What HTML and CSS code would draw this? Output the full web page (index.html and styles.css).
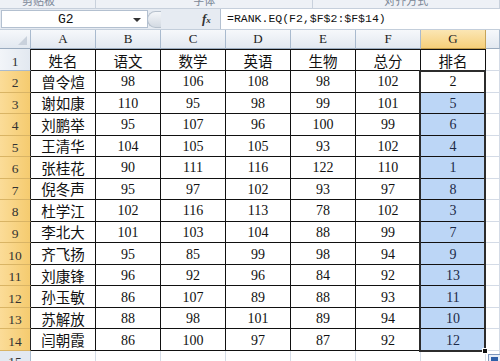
FILE: index.html
```html
<!DOCTYPE html>
<html>
<head>
<meta charset="utf-8">
<link rel="stylesheet" href="styles.css">
</head>
<body>
<div class="ribbon">
  <div class="grp g1"><span>剪贴板</span></div>
  <div class="grp g2"><span>字体</span></div>
  <div class="grp g3"><span>对齐方式</span></div>
  <div class="grp g4"></div>
</div>
<div class="fbar">
  <div class="namebox"><span class="nm">G2</span><span class="arr"></span></div>
  <div class="pill"></div>
  <div class="fx">f<i>x</i></div>
  <div class="formula">=RANK.EQ(F2,$F$2:$F$14)</div>
</div>
<div class="sheet">
  <div class="hd corner"><span class="tri"></span></div>
  <div class="hd col">A</div><div class="hd col">B</div><div class="hd col">C</div><div class="hd col">D</div><div class="hd col">E</div><div class="hd col">F</div><div class="hd col sel">G</div><div class="hd col"></div>

  <div class="rh">1</div><div class="c t">姓名</div><div class="c t">语文</div><div class="c t">数学</div><div class="c t">英语</div><div class="c t">生物</div><div class="c t">总分</div><div class="c t">排名</div><div class="g"></div>
  <div class="rh s">2</div><div class="c t">曾令煊</div><div class="c">98</div><div class="c">106</div><div class="c">108</div><div class="c">98</div><div class="c">102</div><div class="c act">2<span class="selbox"><span class="handle"></span></span></div><div class="g"></div>
  <div class="rh s">3</div><div class="c t">谢如康</div><div class="c">110</div><div class="c">95</div><div class="c">98</div><div class="c">99</div><div class="c">101</div><div class="c b">5</div><div class="g"></div>
  <div class="rh s">4</div><div class="c t">刘鹏举</div><div class="c">95</div><div class="c">107</div><div class="c">96</div><div class="c">100</div><div class="c">99</div><div class="c b">6</div><div class="g"></div>
  <div class="rh s">5</div><div class="c t">王清华</div><div class="c">104</div><div class="c">105</div><div class="c">105</div><div class="c">93</div><div class="c">102</div><div class="c b">4</div><div class="g"></div>
  <div class="rh s">6</div><div class="c t">张桂花</div><div class="c">90</div><div class="c">111</div><div class="c">116</div><div class="c">122</div><div class="c">110</div><div class="c b">1</div><div class="g"></div>
  <div class="rh s">7</div><div class="c t">倪冬声</div><div class="c">95</div><div class="c">97</div><div class="c">102</div><div class="c">93</div><div class="c">97</div><div class="c b">8</div><div class="g"></div>
  <div class="rh s">8</div><div class="c t">杜学江</div><div class="c">102</div><div class="c">116</div><div class="c">113</div><div class="c">78</div><div class="c">102</div><div class="c b">3</div><div class="g"></div>
  <div class="rh s">9</div><div class="c t">李北大</div><div class="c">101</div><div class="c">103</div><div class="c">104</div><div class="c">88</div><div class="c">99</div><div class="c b">7</div><div class="g"></div>
  <div class="rh s">10</div><div class="c t">齐飞扬</div><div class="c">95</div><div class="c">85</div><div class="c">99</div><div class="c">98</div><div class="c">94</div><div class="c b">9</div><div class="g"></div>
  <div class="rh s">11</div><div class="c t">刘康锋</div><div class="c">96</div><div class="c">92</div><div class="c">96</div><div class="c">84</div><div class="c">92</div><div class="c b">13</div><div class="g"></div>
  <div class="rh s">12</div><div class="c t">孙玉敏</div><div class="c">86</div><div class="c">107</div><div class="c">89</div><div class="c">88</div><div class="c">93</div><div class="c b">11</div><div class="g"></div>
  <div class="rh s">13</div><div class="c t">苏解放</div><div class="c">88</div><div class="c">98</div><div class="c">101</div><div class="c">89</div><div class="c">94</div><div class="c b">10</div><div class="g"></div>
  <div class="rh s">14</div><div class="c t">闫朝霞</div><div class="c">86</div><div class="c">100</div><div class="c">97</div><div class="c">87</div><div class="c">92</div><div class="c b">12</div><div class="g"></div>
</div>
<div class="row15">
  <div class="rh15">15</div><div class="e"></div><div class="e"></div><div class="e"></div><div class="e"></div><div class="e"></div><div class="e"></div><div class="e"></div><div class="e last"><span class="paste"><span></span></span></div>
</div>
</body>
</html>
```

FILE: styles.css
```css
* { box-sizing: border-box; }
html, body { margin: 0; padding: 0; }
body {
  width: 500px;
  height: 361px;
  overflow: hidden;
  background: #ffffff;
  font-family: "Liberation Serif", "Noto Sans CJK SC", serif;
}

.ribbon {
  height: 9px;
  display: flex;
  background: #eef1f6;
  border-bottom: 1px solid #c6cfdb;
  overflow: hidden;
}
.grp {
  display: flex;
  justify-content: center;
  border-right: 1px solid #c9d1dc;
}
.grp span {
  font-family: "Noto Sans CJK SC", sans-serif;
  font-size: 11px;
  line-height: 11px;
  color: #7b8797;
  margin-top: -5px;
}
.g1 { width: 100px; padding-right: 18px; }
.g2 { width: 228px; }
.g3 { width: 196px; }
.g4 { flex: 1; border-right: none; }

.fbar {
  height: 21px;
  display: flex;
  align-items: center;
  background: #e6ebf2;
  border-bottom: 1px solid #c3cedb;
}
.namebox {
  width: 147px;
  height: 18px;
  margin-left: 1px;
  background: #ffffff;
  border: 1px solid #b3c0d0;
  display: flex;
  align-items: center;
  position: relative;
}
.nm {
  font-family: "Liberation Mono", monospace;
  font-size: 13px;
  color: #111;
  margin-left: 56px;
}
.arr {
  position: absolute;
  left: 131px;
  top: 7px;
  width: 0; height: 0;
  border-left: 4px solid transparent;
  border-right: 4px solid transparent;
  border-top: 4px solid #333;
}
.pill {
  width: 14px;
  height: 17px;
  margin-left: -1px;
  border-radius: 9px 0 0 9px;
  background: linear-gradient(#f4f6f9, #d3dae3);
  border: 1px solid #b7c1cd;
  border-right: none;
}
.fx {
  margin-left: 41px;
  width: 15px;
  font-family: "Liberation Serif", serif;
  font-style: italic;
  font-weight: bold;
  font-size: 13px;
  color: #333;
}
.fx i { font-size: 9px; }
.formula {
  flex: 1;
  height: 20px;
  margin-left: 3px;
  background: #ffffff;
  border-left: 1px solid #b3c0d0;
  font-family: "Liberation Mono", monospace;
  font-size: 11.5px;
  line-height: 20px;
  padding-left: 6px;
  color: #111;
}

.sheet {
  display: grid;
  grid-template-columns: 31px repeat(7, 65px) 1fr;
  grid-template-rows: 19px 22px repeat(13, 21.54px);
}
.hd {
  background: linear-gradient(#f6f8fb, #e2e8f0);
  border-right: 1px solid #a9bace;
  border-bottom: 1px solid #9aabbf;
  display: flex;
  align-items: center;
  justify-content: center;
  font-family: "Liberation Serif", serif;
  font-size: 13px;
  color: #222;
}
.hd.sel {
  background: linear-gradient(#fbe6b4, #f6cf7a);
  border-right-color: #c6a45a;
  border-bottom-color: #c29b4a;
}
.corner { position: relative; }
.tri {
  position: absolute;
  right: 3px;
  bottom: 3px;
  width: 0; height: 0;
  border-left: 9px solid transparent;
  border-bottom: 9px solid #c9d1dc;
}
.rh, .rh15 {
  background: linear-gradient(90deg, #f2f5f9, #e2e8f0);
  border-right: 1px solid #222;
  border-bottom: 1px solid #a9bace;
  display: flex;
  align-items: center;
  justify-content: center;
  padding-top: 4px;
  font-family: "Liberation Serif", serif;
  font-size: 13.5px;
  color: #333;
}
.rh.s {
  background: linear-gradient(90deg, #fbdc98, #f5cb6f);
  border-bottom-color: #d9b465;
}
.row15 {
  display: grid;
  grid-template-columns: 31px repeat(7, 65px) 1fr;
  height: 21px;
}
.rh15 {
  align-items: flex-start;
  padding-top: 3px;
  border-right-color: #a9bace;
  background: #e3e9f1;
}
.c {
  border-right: 1px solid #111;
  border-bottom: 1px solid #111;
  display: flex;
  align-items: center;
  justify-content: center;
  padding-top: 2px;
  font-family: "Liberation Serif", serif;
  font-size: 14px;
  color: #111;
}
.c.t {
  font-family: "Noto Sans CJK SC", sans-serif;
  font-size: 14.5px;
  padding-top: 0;
}
.c.b { background: #bcd6f6; color: #1c2a48; }
.sheet > div:nth-child(n+11):nth-child(-n+17) { border-top: 1px solid #111; }
.act { position: relative; }
.selbox {
  position: absolute;
  left: -2px;
  top: -1px;
  width: 67px;
  height: 282px;
  border: 2px solid #2c2c2c;
  z-index: 2;
}
.handle {
  position: absolute;
  right: -4px;
  bottom: -4px;
  width: 6px;
  height: 6px;
  background: #111;
  border: 1px solid #fff;
}
.g, .e {
  border-right: 1px solid #d4dbe6;
  border-bottom: 1px solid #d4dbe6;
}
.e.last { position: relative; }
.paste {
  position: absolute;
  left: 2px;
  top: 3px;
  width: 14px;
  height: 12px;
  background: #e8eef7;
  border: 1px solid #7d96bd;
  z-index: 2;
}
.paste span {
  display: block;
  margin: 2px;
  width: 7px;
  height: 5px;
  background: #2e5fa8;
}
```
